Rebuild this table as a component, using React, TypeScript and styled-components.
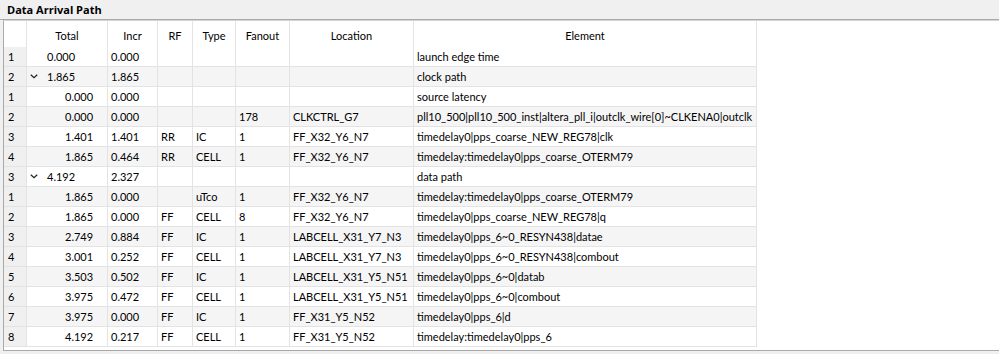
import React from "react";
import styled, { createGlobalStyle } from "styled-components";

const Global = createGlobalStyle`
  html, body { margin: 0; padding: 0; background: #f0f0f0; }
  body { font-family: Lato, "Open Sans", sans-serif; font-size: 11px; color: #000; }
  * { box-sizing: border-box; }
`;

const Panel = styled.div`
  width: 999px;
  height: 354px;
  display: flex;
  flex-direction: column;
  background: #f0f0f0;
  overflow: hidden;
`;

const Title = styled.div`
  height: 20px;
  display: flex;
  align-items: center;
  padding-left: 7px;
  font-family: "Open Sans", sans-serif;
  font-weight: 700;
  font-size: 11px;
  border-bottom: 1px solid #a9a9a9;
`;

const Frame = styled.div`
  margin-left: 3px;
  height: 331px;
  background: #fff;
  border-left: 1px solid #a9a9a9;
  border-bottom: 1px solid #a9a9a9;
  border-top: 1px solid #d4d4d4;
`;

const Grid = styled.div`
  display: grid;
  grid-template-columns: 23px 81px 50px 35px 43px 54px 124px 343px;
  width: 753px;
`;

const HeadCell = styled.div`
  height: 26px;
  padding-top: 2px;
  display: flex;
  align-items: center;
  justify-content: center;
  border-right: 1px solid #e3e3e3;
  background: #fff;
  white-space: nowrap;
`;

const Cell = styled.div<{ $alt: boolean }>`
  height: 20px;
  display: flex;
  align-items: center;
  padding-left: 3px;
  border-right: 1px solid #e3e3e3;
  border-bottom: 1px solid #e3e3e3;
  background: ${(p) => (p.$alt ? "#f5f5f5" : "#fff")};
  white-space: nowrap;
  overflow: hidden;
`;

const NumCell = styled(Cell)`
  background: #f0f0f0;
  padding-left: 4px;
`;

const Chevron = styled.svg`
  position: absolute;
  left: 3px;
  top: 7px;
`;

const TreeCell = styled(Cell)<{ $level: number }>`
  position: relative;
  padding-left: ${(p) => (p.$level === 0 ? 20 : 38)}px;
`;

type Row = {
  n: string;
  level: number;
  open?: boolean;
  total: string;
  incr: string;
  rf?: string;
  type?: string;
  fanout?: string;
  loc?: string;
  el: string;
};

const rows: Row[] = [
  { n: "1", level: 0, total: "0.000", incr: "0.000", el: "launch edge time" },
  { n: "2", level: 0, open: true, total: "1.865", incr: "1.865", el: "clock path" },
  { n: "1", level: 1, total: "0.000", incr: "0.000", el: "source latency" },
  { n: "2", level: 1, total: "0.000", incr: "0.000", fanout: "178", loc: "CLKCTRL_G7", el: "pll10_500|pll10_500_inst|altera_pll_i|outclk_wire[0]~CLKENA0|outclk" },
  { n: "3", level: 1, total: "1.401", incr: "1.401", rf: "RR", type: "IC", fanout: "1", loc: "FF_X32_Y6_N7", el: "timedelay0|pps_coarse_NEW_REG78|clk" },
  { n: "4", level: 1, total: "1.865", incr: "0.464", rf: "RR", type: "CELL", fanout: "1", loc: "FF_X32_Y6_N7", el: "timedelay:timedelay0|pps_coarse_OTERM79" },
  { n: "3", level: 0, open: true, total: "4.192", incr: "2.327", el: "data path" },
  { n: "1", level: 1, total: "1.865", incr: "0.000", type: "uTco", fanout: "1", loc: "FF_X32_Y6_N7", el: "timedelay:timedelay0|pps_coarse_OTERM79" },
  { n: "2", level: 1, total: "1.865", incr: "0.000", rf: "FF", type: "CELL", fanout: "8", loc: "FF_X32_Y6_N7", el: "timedelay0|pps_coarse_NEW_REG78|q" },
  { n: "3", level: 1, total: "2.749", incr: "0.884", rf: "FF", type: "IC", fanout: "1", loc: "LABCELL_X31_Y7_N3", el: "timedelay0|pps_6~0_RESYN438|datae" },
  { n: "4", level: 1, total: "3.001", incr: "0.252", rf: "FF", type: "CELL", fanout: "1", loc: "LABCELL_X31_Y7_N3", el: "timedelay0|pps_6~0_RESYN438|combout" },
  { n: "5", level: 1, total: "3.503", incr: "0.502", rf: "FF", type: "IC", fanout: "1", loc: "LABCELL_X31_Y5_N51", el: "timedelay0|pps_6~0|datab" },
  { n: "6", level: 1, total: "3.975", incr: "0.472", rf: "FF", type: "CELL", fanout: "1", loc: "LABCELL_X31_Y5_N51", el: "timedelay0|pps_6~0|combout" },
  { n: "7", level: 1, total: "3.975", incr: "0.000", rf: "FF", type: "IC", fanout: "1", loc: "FF_X31_Y5_N52", el: "timedelay0|pps_6|d" },
  { n: "8", level: 1, total: "4.192", incr: "0.217", rf: "FF", type: "CELL", fanout: "1", loc: "FF_X31_Y5_N52", el: "timedelay:timedelay0|pps_6" },
];

const headers = ["", "Total", "Incr", "RF", "Type", "Fanout", "Location", "Element"];

export default function App() {
  return (
    <>
      <Global />
      <Panel>
        <Title>Data Arrival Path</Title>
        <Frame>
          <Grid>
            {headers.map((h, i) => (
              <HeadCell key={i}>{h}</HeadCell>
            ))}
            {rows.map((r, i) => {
              const alt = i % 2 === 1;
              return (
                <React.Fragment key={i}>
                  <NumCell $alt={alt}>{r.n}</NumCell>
                  <TreeCell $alt={alt} $level={r.level}>
                    {r.open && (
                      <Chevron width="8" height="5" viewBox="0 0 8 5">
                        <path d="M0.8 0.8 L4 3.8 L7.2 0.8" fill="none" stroke="#222" strokeWidth="1.2" />
                      </Chevron>
                    )}
                    {r.total}
                  </TreeCell>
                  <Cell $alt={alt}>{r.incr}</Cell>
                  <Cell $alt={alt}>{r.rf ?? ""}</Cell>
                  <Cell $alt={alt}>{r.type ?? ""}</Cell>
                  <Cell $alt={alt}>{r.fanout ?? ""}</Cell>
                  <Cell $alt={alt}>{r.loc ?? ""}</Cell>
                  <Cell $alt={alt}>{r.el}</Cell>
                </React.Fragment>
              );
            })}
          </Grid>
        </Frame>
      </Panel>
    </>
  );
}
